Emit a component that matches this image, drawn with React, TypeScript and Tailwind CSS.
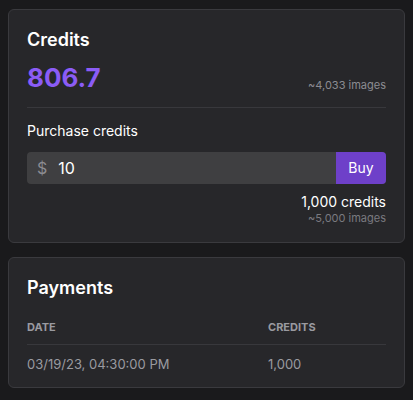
import { useState } from "react";

const App = () => {
  const [amount, setAmount] = useState("10");

  return (
    <div className="min-h-[400px] w-full bg-[#1a1a1c] px-2 pt-[9px] pb-2 font-['Inter',sans-serif] flex flex-col gap-[14px]">
      {/* credits card */}
      <div className="rounded-md border border-[#3a3a3e] bg-[#27272a] px-[18px] pt-[18px] pb-[18px]">
        <h2 className="text-lg font-semibold leading-6 text-white">Credits</h2>
        <div className="mt-[10px] flex items-end justify-between border-b border-[#38383c] pb-[13px]">
          <span className="text-[26px] font-bold leading-8 text-[#8b5cf6]">806.7</span>
          <span className="mb-[1px] text-[11px] text-[#8c8c92]">~4,033 images</span>
        </div>
        <div className="mt-[13px] text-sm leading-5 text-white">Purchase credits</div>
        <div className="mt-[11px] flex h-8 overflow-hidden rounded-[4px] bg-[#3f3f41]">
          <span className="flex items-center pl-[10px] pr-[11px] text-base text-[#8c8c92]">$</span>
          <input
            value={amount}
            onChange={(e) => setAmount(e.target.value)}
            className="min-w-0 flex-1 bg-transparent text-base text-white outline-none"
          />
          <button className="w-[50px] bg-[#6e40c9] text-sm text-white">Buy</button>
        </div>
        <div className="mt-[8px] text-right text-sm leading-5 text-white">1,000 credits</div>
        <div className="text-right text-[11px] leading-3 text-[#7a7a80]">~5,000 images</div>
      </div>

      {/* payments card */}
      <div className="rounded-md border border-[#3a3a3e] bg-[#27272a] px-[18px] pt-[18px] pb-[13px]">
        <h2 className="text-lg font-semibold leading-6 text-white">Payments</h2>
        <table className="mt-[19px] w-full text-left">
          <thead>
            <tr className="border-b border-[#38383c]">
              <th className="w-[241px] pb-[8px] text-[11px] font-bold uppercase text-[#9a9aa0]">Date</th>
              <th className="pb-[8px] text-[11px] font-bold uppercase text-[#9a9aa0]">Credits</th>
            </tr>
          </thead>
          <tbody>
            <tr>
              <td className="pt-[10px] text-[13px] text-[#9a9aa0]">03/19/23, 04:30:00 PM</td>
              <td className="pt-[10px] text-[13px] text-[#9a9aa0]">1,000</td>
            </tr>
          </tbody>
        </table>
      </div>
    </div>
  );
};

export default App;
